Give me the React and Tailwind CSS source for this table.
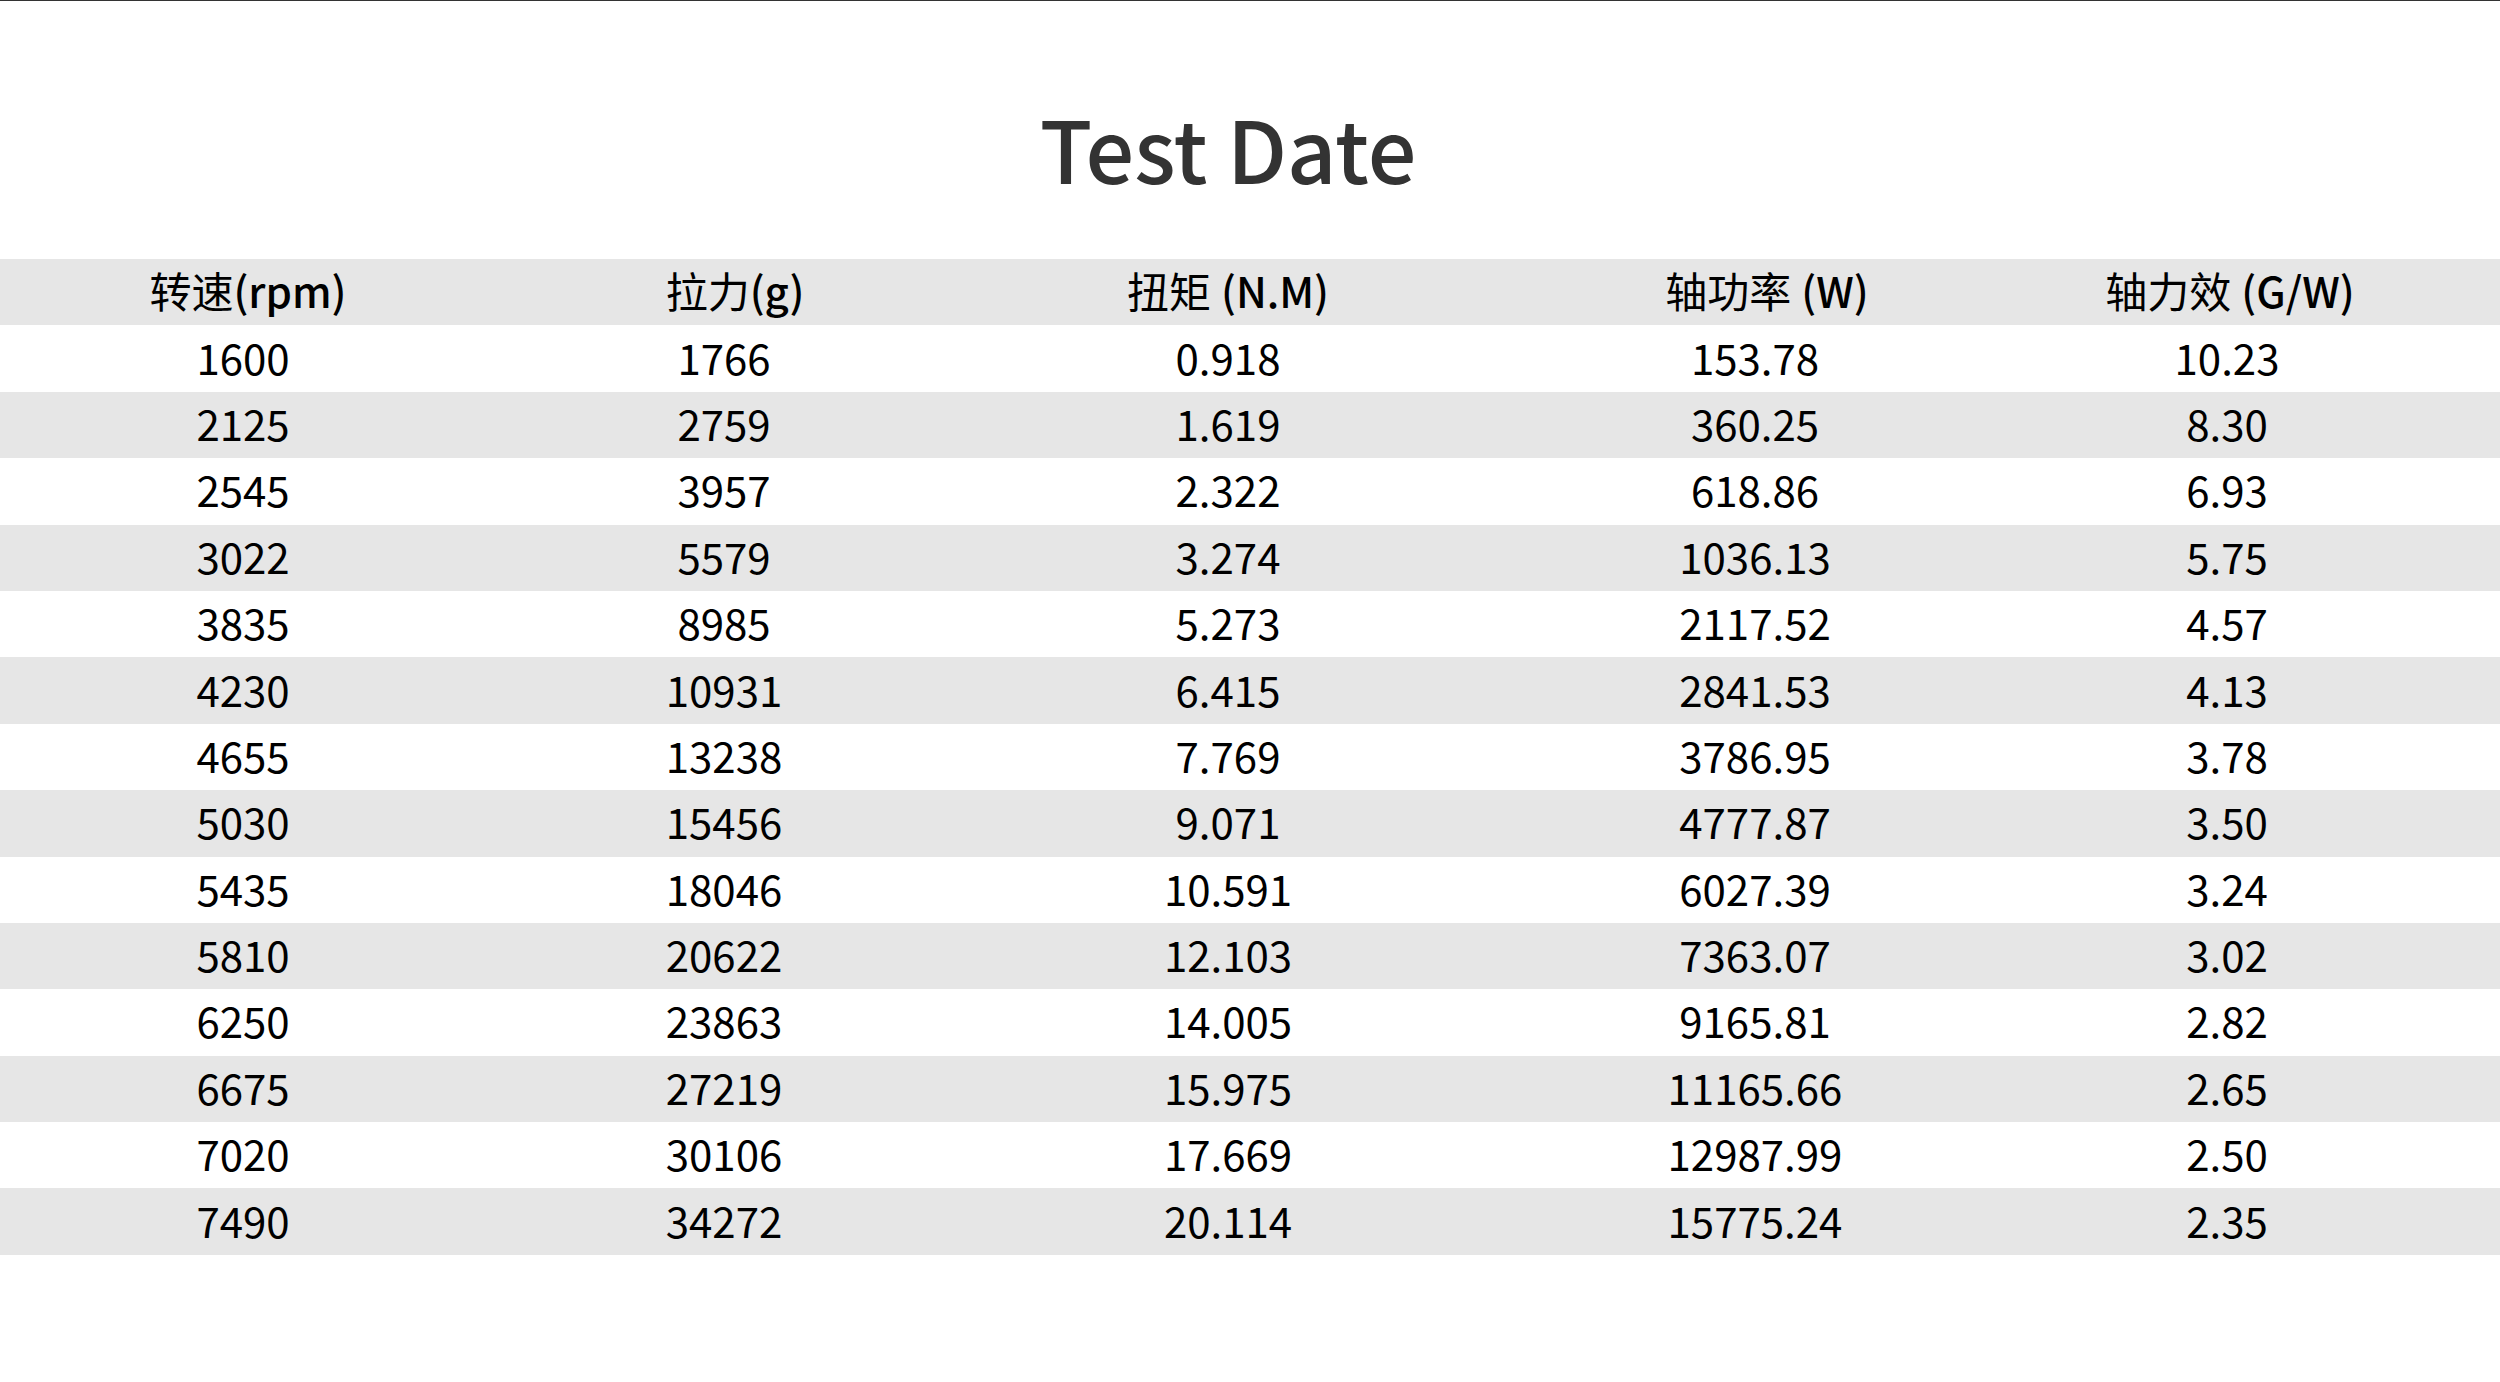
import React from 'react';

const headers = [
  { cn: '转速', en: '(rpm)', gap: false, shift: 'pl-[10px]' },
  { cn: '拉力', en: '(g)', gap: false, shift: 'pl-[22px]' },
  { cn: '扭矩', en: '(N.M)', gap: true, shift: 'pl-0' },
  { cn: '轴功率', en: '(W)', gap: true, shift: 'pl-[24px]' },
  { cn: '轴力效', en: '(G/W)', gap: true, shift: 'pl-[6px]' },
];

const rows = [
  ['1600', '1766', '0.918', '153.78', '10.23'],
  ['2125', '2759', '1.619', '360.25', '8.30'],
  ['2545', '3957', '2.322', '618.86', '6.93'],
  ['3022', '5579', '3.274', '1036.13', '5.75'],
  ['3835', '8985', '5.273', '2117.52', '4.57'],
  ['4230', '10931', '6.415', '2841.53', '4.13'],
  ['4655', '13238', '7.769', '3786.95', '3.78'],
  ['5030', '15456', '9.071', '4777.87', '3.50'],
  ['5435', '18046', '10.591', '6027.39', '3.24'],
  ['5810', '20622', '12.103', '7363.07', '3.02'],
  ['6250', '23863', '14.005', '9165.81', '2.82'],
  ['6675', '27219', '15.975', '11165.66', '2.65'],
  ['7020', '30106', '17.669', '12987.99', '2.50'],
  ['7490', '34272', '20.114', '15775.24', '2.35'],
];

const grid = 'grid grid-cols-[486px_476px_532px_522px_422px] h-[66.4px]';

export default function App() {
  return (
    <div className="w-[2500px] h-[1382px] bg-white border-t border-[#333333] font-['Noto_Sans_CJK_SC','Noto_Sans',sans-serif] text-black">
      <h1 className="pt-[103px] pb-[2px] pr-[44px] text-center text-[86px] leading-[86px] font-medium text-[#333333]">
        Test Date
      </h1>

      <div className="mt-[67px]">
        <div className={`${grid} bg-[#e6e6e6]`}>
          {headers.map((h) => (
            <div key={h.cn} className={`flex items-center justify-center pb-1 text-[42px] leading-[42px] ${h.shift}`}>
              <span>{h.cn}</span>
              {h.gap && <span className="w-[10px]" />}
              <span className="font-medium">{h.en}</span>
            </div>
          ))}
        </div>

        {rows.map((r, i) => (
          <div key={r[0]} className={`${grid} ${i % 2 === 1 ? 'bg-[#e6e6e6]' : 'bg-white'}`}>
            {r.map((v, j) => (
              <div key={j} className="flex items-center justify-center pb-1 text-[42px] leading-[42px]">
                {v}
              </div>
            ))}
          </div>
        ))}
      </div>
    </div>
  );
}
